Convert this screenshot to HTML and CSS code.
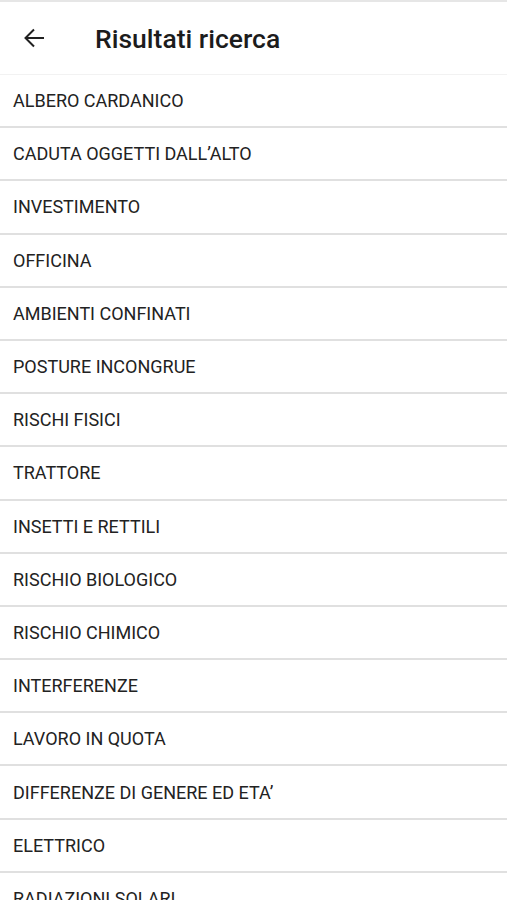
FILE: index.html
```html
<!DOCTYPE html>
<html lang="it">
<head>
    <meta charset="UTF-8">
    <meta name="viewport" content="width=device-width, initial-scale=1.0">
    <title>Risultati ricerca</title>
    <link rel="stylesheet" href="styles.css">
</head>
<body>
    <div id="header">
        <div class="back">
            <svg width="24" height="24" viewBox="0 0 24 24">
                <path d="M22 12H3.5M12 3.5L3.5 12l8.5 8.5" fill="none" stroke="#212121" stroke-width="2"/>
            </svg>
        </div>
        <div class="title">Risultati ricerca</div>
    </div>
    <div id="list">
        <div class="item">ALBERO CARDANICO</div>
        <div class="item">CADUTA OGGETTI DALL’ALTO</div>
        <div class="item">INVESTIMENTO</div>
        <div class="item">OFFICINA</div>
        <div class="item">AMBIENTI CONFINATI</div>
        <div class="item">POSTURE INCONGRUE</div>
        <div class="item">RISCHI FISICI</div>
        <div class="item">TRATTORE</div>
        <div class="item">INSETTI E RETTILI</div>
        <div class="item">RISCHIO BIOLOGICO</div>
        <div class="item">RISCHIO CHIMICO</div>
        <div class="item">INTERFERENZE</div>
        <div class="item">LAVORO IN QUOTA</div>
        <div class="item">DIFFERENZE DI GENERE ED ETA’</div>
        <div class="item">ELETTRICO</div>
        <div class="item">RADIAZIONI SOLARI</div>
    </div>
</body>
</html>
```

FILE: styles.css
```css
body {
    margin: 0;
    background-color: #fff;
    font-family: Roboto, "Liberation Sans", sans-serif;
    color: #212121;
    overflow: hidden;
}
#header {
    display: flex;
    align-items: center;
    height: 72px;
    border-top: 2px solid #e6e6e6;
    border-bottom: 1px solid #f2f2f2;
}
.back {
    display: flex;
    width: 24px;
    height: 24px;
    margin-left: 22px;
}
.title {
    margin-left: 49px;
    font-size: 26.5px;
    font-weight: 500;
    color: #1c1c1c;
}
.item {
    display: flex;
    align-items: center;
    height: 51.2px;
    padding-left: 13px;
    border-bottom: 2px solid #e0e0e0;
    font-size: 18px;
    color: #222;
}
```
